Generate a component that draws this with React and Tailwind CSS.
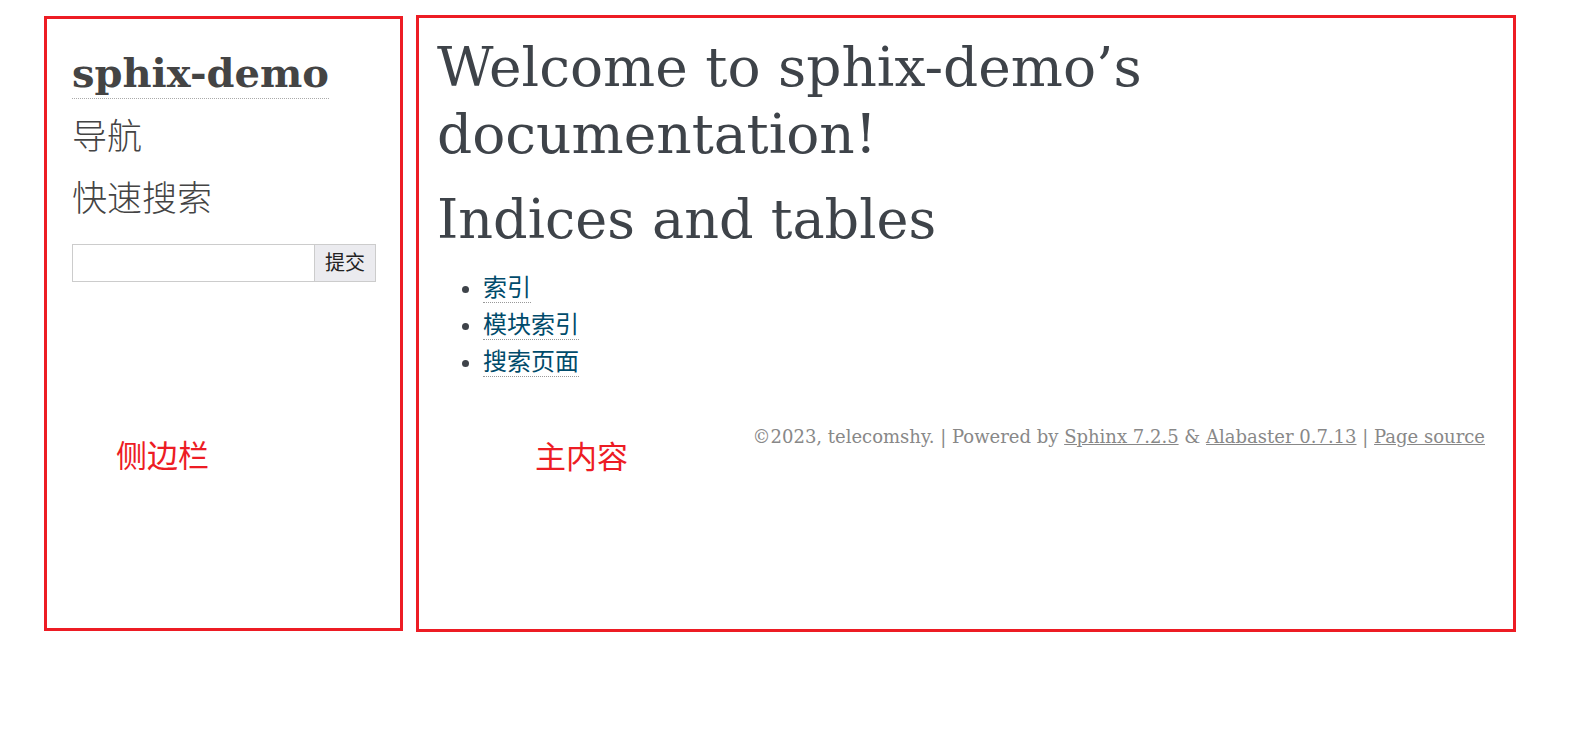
import React from "react";

const serif = { fontFamily: '"DejaVu Serif", "Noto Sans CJK SC", serif' };

function Sidebar() {
  return (
    <div className="relative mt-[16px] h-[615px] w-[359px] shrink-0 border-[3px] border-[#ed1c24] px-[25px] pt-[30px]">
      <a
        href="#"
        className="inline-block border-b border-dotted border-[#aaa] pb-[1px] text-[40px] font-bold leading-[48px] text-[#444]"
      >
        sphix-demo
      </a>
      <h3 className="mt-[18px] text-[35px] font-light leading-[40px] text-[#444]">导航</h3>
      <h3 className="mt-[22px] text-[35px] font-light leading-[40px] text-[#444]">快速搜索</h3>
      <form className="mt-[25px] flex h-[38px] w-[304px]">
        <input
          type="text"
          className="h-full w-[243px] border border-[#ccc] bg-white outline-none"
        />
        <button
          type="button"
          className="h-full w-[61px] border border-l-0 border-[#ccc] bg-[#ebebef] text-[20px] text-[#222]"
        >
          提交
        </button>
      </form>
      <div
        className="absolute left-[69px] top-[412px] text-[31px] text-[#ed1c24]"
        style={{ fontFamily: '"Noto Sans CJK SC", sans-serif' }}
      >
        侧边栏
      </div>
    </div>
  );
}

function Main() {
  const links = ["索引", "模块索引", "搜索页面"];
  return (
    <div className="relative mt-[15px] h-[617px] w-[1100px] shrink-0 border-[3px] border-[#ed1c24] pl-[18px] pr-[28px] pt-[16px] text-[#3e4349]">
      <h1 className="text-[55px] font-normal leading-[67px]">
        Welcome to sphix-demo’s
        <br />
        documentation!
      </h1>
      <h2 className="mt-[18px] text-[54px] font-normal leading-[68px]">Indices and tables</h2>
      <ul className="mt-[16px] list-disc pl-[46px] text-[24px] leading-[37px]">
        {links.map((l) => (
          <li key={l} className="marker:text-[#3e4349]">
            <a href="#" className="border-b border-dotted border-[#999] text-[#004b6b]">
              {l}
            </a>
          </li>
        ))}
      </ul>
      <div className="mt-[42px] text-right text-[18px] text-[#888]">
        ©2023, telecomshy. | Powered by{" "}
        <a href="#" className="underline">Sphinx 7.2.5</a> &amp;{" "}
        <a href="#" className="underline">Alabaster 0.7.13</a> |{" "}
        <a href="#" className="underline">Page source</a>
      </div>
      <div
        className="absolute left-[116px] top-[414px] text-[31px] text-[#ed1c24]"
        style={{ fontFamily: '"Noto Sans CJK SC", sans-serif' }}
      >
        主内容
      </div>
    </div>
  );
}

export default function App() {
  return (
    <div className="flex min-h-[755px] gap-[13px] bg-white pl-[44px]" style={serif}>
      <Sidebar />
      <Main />
    </div>
  );
}
